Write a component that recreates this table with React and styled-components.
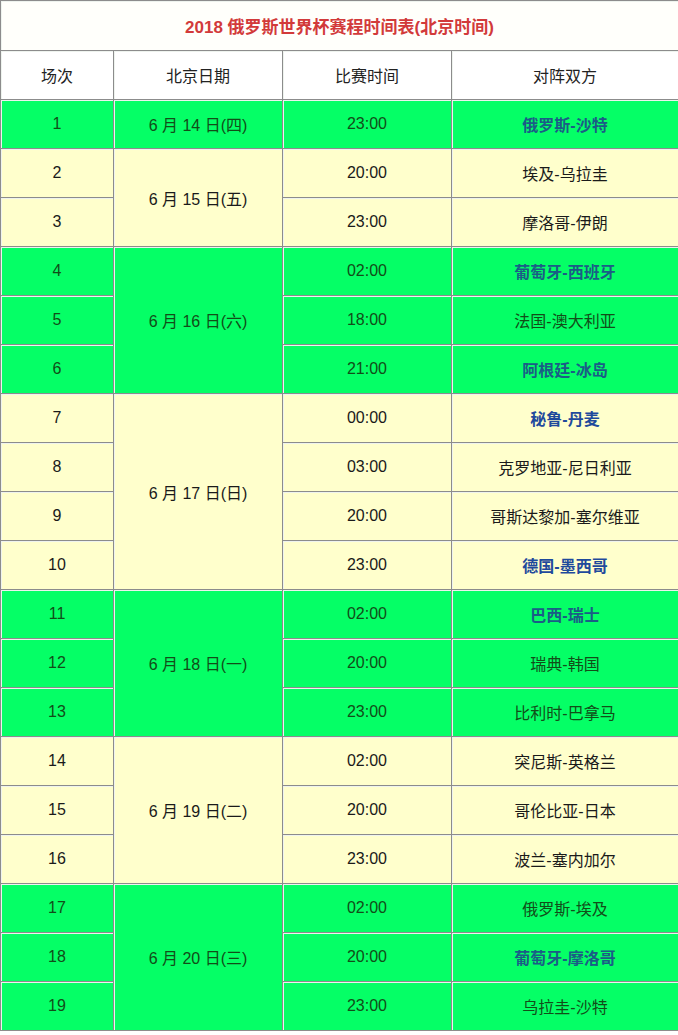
import React from 'react';
import styled, { createGlobalStyle } from 'styled-components';

const GlobalStyle = createGlobalStyle`
body {
  margin: 0;
  background: #ffffff;
  font-family: "Liberation Sans", "Noto Sans CJK SC", sans-serif;
}
`

const GREEN = '#05ff66';
const YELLOW = '#ffffcc';

const Table = styled.table`
width: 678px;
border-collapse: separate;
border-spacing: 0;
table-layout: fixed;
border-right: 1px solid #8c8c8c;
border-bottom: 1px solid #8c8c8c;
`

const Cell = styled.td`
height: 48px;
padding: 0;
text-align: center;
vertical-align: middle;
border-top: 1px solid #8c8c8c;
border-left: 1px solid #8c8c8c;
box-shadow: inset 1px 1px 0 #eef3ee;
background: ${(p) => p.$bg || '#ffffff'};
color: ${(p) => p.$color || '#1a1a1a'};
font-size: 16px;
font-weight: ${(p) => (p.$bold ? 700 : 400)};
`

const TitleCell = styled(Cell)`
height: 49px;
background: #fffffb;
color: #d23a3a;
font-weight: 700;
font-size: 17px;
`

const HeadCell = styled(Cell)`
background: #ffffff;
color: #222222;
`

const days = [
  { date: '6 月 14 日(四)', green: true, games: [['23:00', '俄罗斯-沙特', true]] },
  { date: '6 月 15 日(五)', green: false, games: [['20:00', '埃及-乌拉圭'], ['23:00', '摩洛哥-伊朗']] },
  { date: '6 月 16 日(六)', green: true, games: [['02:00', '葡萄牙-西班牙', true], ['18:00', '法国-澳大利亚'], ['21:00', '阿根廷-冰岛', true]] },
  { date: '6 月 17 日(日)', green: false, games: [['00:00', '秘鲁-丹麦', true], ['03:00', '克罗地亚-尼日利亚'], ['20:00', '哥斯达黎加-塞尔维亚'], ['23:00', '德国-墨西哥', true]] },
  { date: '6 月 18 日(一)', green: true, games: [['02:00', '巴西-瑞士', true], ['20:00', '瑞典-韩国'], ['23:00', '比利时-巴拿马']] },
  { date: '6 月 19 日(二)', green: false, games: [['02:00', '突尼斯-英格兰'], ['20:00', '哥伦比亚-日本'], ['23:00', '波兰-塞内加尔']] },
  { date: '6 月 20 日(三)', green: true, games: [['02:00', '俄罗斯-埃及'], ['20:00', '葡萄牙-摩洛哥', true], ['23:00', '乌拉圭-沙特']] },
];

const App = () => {
  let n = 0;
  return (
    <>
      <GlobalStyle />
      <Table>
        <colgroup>
          <col style={{ width: 113 }} />
          <col style={{ width: 169 }} />
          <col style={{ width: 169 }} />
          <col style={{ width: 227 }} />
        </colgroup>
        <tbody>
          <tr>
            <TitleCell colSpan={4}>2018 俄罗斯世界杯赛程时间表(北京时间)</TitleCell>
          </tr>
          <tr>
            <HeadCell>场次</HeadCell>
            <HeadCell>北京日期</HeadCell>
            <HeadCell>比赛时间</HeadCell>
            <HeadCell>对阵双方</HeadCell>
          </tr>
          {days.map((day) => {
            const bg = day.green ? GREEN : YELLOW;
            const text = day.green ? '#124d18' : '#1a1a1a';
            return day.games.map(([time, teams, bold], i) => {
              n += 1;
              const teamColor = bold ? (day.green ? '#1b5c86' : '#1f4a9c') : text;
              return (
                <tr key={n}>
                  <Cell $bg={bg} $color={text}>{n}</Cell>
                  {i === 0 && (
                    <Cell $bg={bg} $color={text} rowSpan={day.games.length}>{day.date}</Cell>
                  )}
                  <Cell $bg={bg} $color={text}>{time}</Cell>
                  <Cell $bg={bg} $color={teamColor} $bold={bold}>{teams}</Cell>
                </tr>
              );
            });
          })}
        </tbody>
      </Table>
    </>
  );
};

export default App;
